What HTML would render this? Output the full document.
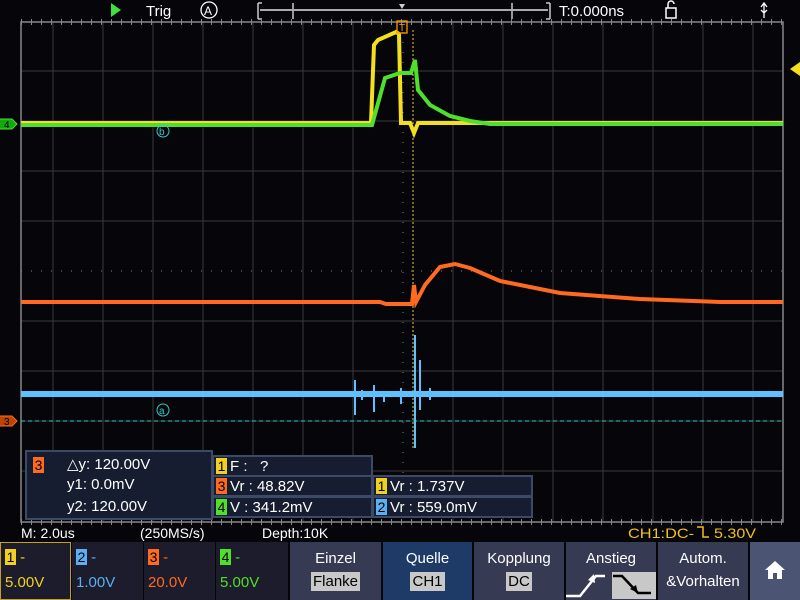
<!DOCTYPE html>
<html><head><meta charset="utf-8"><style>
body{margin:0;width:800px;height:600px;background:#05050a;overflow:hidden;position:relative;font-family:"Liberation Sans",sans-serif;color:#fff}
.a{position:absolute}
.t{font-size:14px;white-space:nowrap}
.btn{position:absolute;top:542px;height:58px;background:#363a52;text-align:center;font-size:15px;color:#fff}
.btn .l{margin-top:8px}
.btn .v{display:inline-block;background:#c8c8c8;color:#000;padding:1px 2px;margin-top:5px;font-size:15px}
.ch{position:absolute;top:542px;height:58px;width:71px;background:#1c1c2c;font-size:15px}
.sq{display:inline-block;width:11px;height:16px;color:#000;text-align:center;font-size:14px;line-height:16px}
.ib{position:absolute;background:#161d30;border:2px solid #3c4a66;font-size:15px;color:#fff;white-space:nowrap}
</style></head><body>
<svg class="a" style="left:0;top:0" width="800" height="600">
<polygon points="111,3 121,10 111,17" fill="#3ee03e"/>
<text x="146" y="16" fill="#fff" font-size="15" font-family="Liberation Sans">Trig</text>
<circle cx="209" cy="10" r="8" fill="none" stroke="#fff" stroke-width="1.3"/>
<text x="204" y="15" fill="#fff" font-size="12" font-family="Liberation Sans">A</text>
<path d="M258,3V19M258,3h4M258,19h4M550,3V19M550,3h-4M550,19h-4M293,3V19M512,3V19" stroke="#ccc" stroke-width="1.5" fill="none"/>
<line x1="260" y1="10" x2="548" y2="10" stroke="#aaa" stroke-width="2"/>
<polygon points="399,4 405,4 402,9" fill="#ccc"/>
<text x="559" y="16" fill="#fff" font-size="15" font-family="Liberation Sans">T:0.000ns</text>
<rect x="666" y="8" width="10" height="10" fill="none" stroke="#fff" stroke-width="1.5"/>
<path d="M668,8V4a3,3 0 0 1 6,0" stroke="#fff" fill="none" stroke-width="1.5"/>
<path d="M764,3V18M761,7l3,-4 3,4M761,10l3,3 3,-3" stroke="#fff" fill="none" stroke-width="1.3"/>
<g stroke="#3a3a3a" stroke-width="1">
<path d="M53,22V522M103,22V522M153,22V522M203,22V522M253,22V522M303,22V522M353,22V522M453,22V522M503,22V522M553,22V522M603,22V522M653,22V522M703,22V522M753,22V522"/>
<path d="M21,71H783M21,121H783M21,171H783M21,221H783M21,321H783M21,371H783M21,421H783M21,471H783"/>
</g>
<path d="M403,22V522M21,271H783" stroke="#888" stroke-dasharray="1,9"/>
<rect x="21" y="22" width="762" height="500" fill="none" stroke="#888" stroke-width="1.5"/>
<path d="M21,522H783" stroke="#888" stroke-dasharray="1,9" stroke-width="6"/>
<path d="M21,22H783" stroke="#888" stroke-dasharray="1,9" stroke-width="6"/>
<line x1="21" y1="421" x2="783" y2="421" stroke="#3cc" stroke-dasharray="4,3"/>
<line x1="413" y1="30" x2="413" y2="450" stroke="#ec3" stroke-dasharray="2,2"/>
<polyline points="21,302 380,302 386,304 412,304 414,285 416,302 425,285 440,267 455,264 470,268 500,281 560,293 640,299 720,302 783,302" fill="none" stroke="#ff6a20" stroke-width="4"/>
<polyline points="21,394 783,394" stroke="#5ec0ff" stroke-width="6"/>
<path d="M355,380V415M362,390V400M374,385V412M401,388V404M415,335V448M420,360V410M430,388V400M384,392V402" stroke="#5ec0ff" stroke-width="2"/>
<polyline points="21,123 371,123 374,45 378,40 396,32 399,34 401,123 410,123 414,133 418,123 783,123" fill="none" stroke="#f2e020" stroke-width="4"/>
<polyline points="21,125 372,125 385,78 400,73 411,73 415,60 418,90 430,105 450,116 470,121 490,124 783,124" fill="none" stroke="#4ee02a" stroke-width="4"/>
<rect x="397" y="21" width="10" height="12" fill="none" stroke="#f90" stroke-width="1.3"/>
<text x="399" y="31" fill="#f90" font-size="10" font-family="Liberation Sans">T</text>
<polygon points="800,62 790,69 800,76" fill="#f2e020"/>
<path d="M0,119h12l5,5 -5,5H0" fill="#1a1" stroke="#4ee02a"/><text x="4" y="128" fill="#000" font-size="10">4</text>
<path d="M0,416h12l5,5 -5,5H0" fill="#b40" stroke="#ff6a20"/><text x="4" y="425" fill="#000" font-size="10">3</text>
<circle cx="163" cy="131" r="6" fill="none" stroke="#3cc"/><text x="159" y="135" fill="#3cc" font-size="10">b</text>
<circle cx="163" cy="410" r="6" fill="none" stroke="#3cc"/><text x="159" y="414" fill="#3cc" font-size="10">a</text>
<text x="628" y="538" fill="#f2c020" font-size="14" font-family="Liberation Sans" textLength="66" lengthAdjust="spacingAndGlyphs">CH1:DC-</text>
<path d="M697,527h6v10h6" stroke="#f2c020" fill="none" stroke-width="1.5"/>
<text x="714" y="538" fill="#f2c020" font-size="14" font-family="Liberation Sans" textLength="42" lengthAdjust="spacingAndGlyphs">5.30V</text>
</svg>
<div class="ib" style="left:25px;top:450px;width:184px;height:66px">
<span class="sq" style="background:#ff6a20;position:absolute;left:6px;top:5px">3</span>
<div class="a" style="left:40px;top:3px">△y: 120.00V</div>
<div class="a" style="left:40px;top:24px">y1: 0.0mV</div>
<div class="a" style="left:40px;top:46px">y2: 120.00V</div>
</div>
<div class="ib" style="left:212px;top:455px;width:157px;height:18px"><span class="sq" style="background:#f2d020;margin:1px 3px 0 2px">1</span>F :&nbsp;&nbsp;&nbsp;?</div>
<div class="ib" style="left:212px;top:475px;width:157px;height:18px"><span class="sq" style="background:#ff6a20;margin:1px 3px 0 2px">3</span>Vr : 48.82V</div>
<div class="ib" style="left:212px;top:496px;width:157px;height:18px"><span class="sq" style="background:#4ee02a;margin:1px 3px 0 2px">4</span>V : 341.2mV</div>
<div class="ib" style="left:372px;top:475px;width:157px;height:18px"><span class="sq" style="background:#f2d020;margin:1px 3px 0 2px">1</span>Vr : 1.737V</div>
<div class="ib" style="left:372px;top:496px;width:157px;height:18px"><span class="sq" style="background:#5ab0f0;margin:1px 3px 0 2px">2</span>Vr : 559.0mV</div>
<div class="a t" style="left:21px;top:525px">M: 2.0us</div>
<div class="a t" style="left:140px;top:525px">(250MS/s)</div>
<div class="a t" style="left:262px;top:525px">Depth:10K</div>
<div class="ch" style="left:0;border:1px solid #c8a020;width:69px;height:56px;color:#f2d020"><div style="margin:6px 0 0 4px"><span class="sq" style="background:#f2d020">1</span> -</div><div style="margin:8px 0 0 4px">5.00V</div></div>
<div class="ch" style="left:72px;color:#5ab0f0"><div style="margin:7px 0 0 4px"><span class="sq" style="background:#5ab0f0">2</span> -</div><div style="margin:8px 0 0 4px">1.00V</div></div>
<div class="ch" style="left:144px;color:#ff6a20"><div style="margin:7px 0 0 4px"><span class="sq" style="background:#ff6a20">3</span> -</div><div style="margin:8px 0 0 4px">20.0V</div></div>
<div class="ch" style="left:216px;width:72px;color:#4ee02a"><div style="margin:7px 0 0 4px"><span class="sq" style="background:#4ee02a">4</span> -</div><div style="margin:8px 0 0 4px">5.00V</div></div>
<div class="btn" style="left:290px;width:91px"><div class="l">Einzel</div><span class="v">Flanke</span></div>
<div class="btn" style="left:383px;width:89px;background:#1e3a66"><div class="l">Quelle</div><span class="v">CH1</span></div>
<div class="btn" style="left:474px;width:90px"><div class="l">Kopplung</div><span class="v">DC</span></div>
<div class="btn" style="left:566px;width:90px"><div class="l">Anstieg</div>
<svg class="a" style="left:0;top:27px" width="90" height="31"><path d="M0,27h14l16,-20h9" stroke="#fff" stroke-width="2.5" fill="none"/><polygon points="28,5 29,14 22,11" fill="#fff"/><rect x="46" y="3" width="44" height="27" fill="#c8c8c8"/><path d="M47,7h9l16,17h13" stroke="#000" stroke-width="2.5" fill="none"/><polygon points="72,24 64,20 70,16" fill="#000"/></svg></div>
<div class="btn" style="left:658px;width:90px"><div class="l">Autom.</div><div style="margin-top:6px">&amp;Vorhalten</div></div>
<div class="btn" style="left:750px;width:50px;background:#4c5474"><svg style="margin-top:17px" width="22" height="22"><path d="M11,2L1,11h3v9h5v-6h4v6h5v-9h3z" fill="#fff"/></svg></div>
</body></html>
